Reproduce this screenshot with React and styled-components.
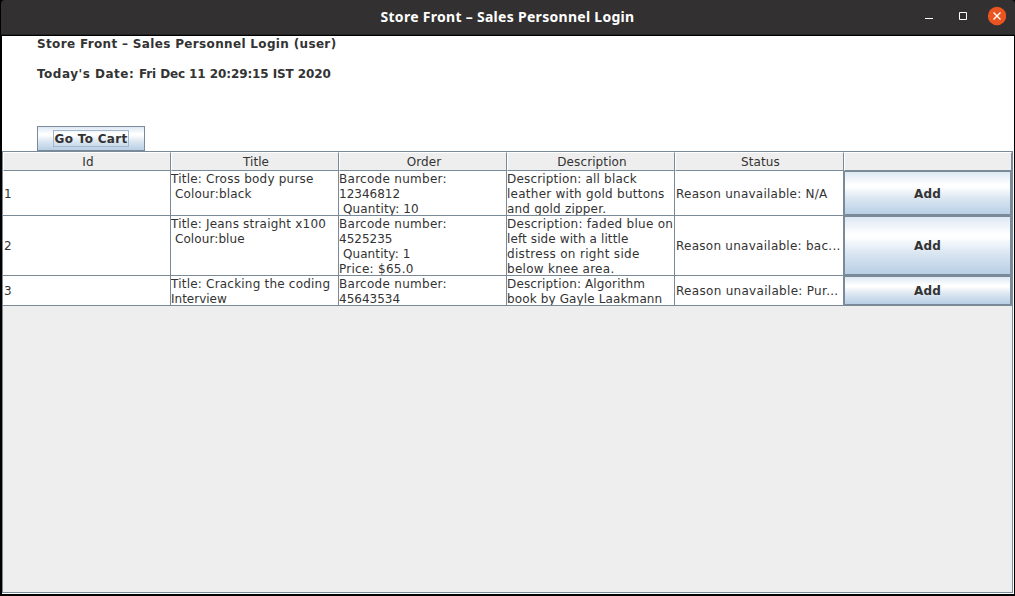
import React from "react";
import styled, { createGlobalStyle } from "styled-components";

const LINE = "#7a8a99";

const GlobalStyle = createGlobalStyle`
  * { box-sizing: border-box; }
  body { margin: 0; background: #000; overflow: hidden; }
`;

const Window = styled.div`
  display: flex;
  flex-direction: column;
  width: 1015px;
  height: 596px;
  background: #000;
  color: #333;
  font: 12px/15px "DejaVu Sans", sans-serif;
`;

const TitleBar = styled.header`
  display: grid;
  grid-template-columns: 1fr auto 1fr;
  align-items: center;
  height: 35px;
  margin-left: 1px;
  padding: 0 9px 2px 8px;
  border-bottom: 1px solid #222;
  border-radius: 4px 4px 0 0;
  background: #323030;
`;

const WindowTitle = styled.h1`
  grid-column: 2;
  margin: 0;
  padding-top: 1px;
  color: #fff;
  font: bold 14px/20px "Noto Sans", sans-serif;
  letter-spacing: 0.29px;
  white-space: nowrap;
`;

const WindowControls = styled.div`
  display: flex;
  justify-content: flex-end;
  align-items: center;
`;

const ControlIcon = styled.svg`
  display: block;
`;

const Content = styled.main`
  display: flex;
  flex-direction: column;
  height: 558px;
  margin: 1px 1px 0 2px;
  padding-bottom: 1px;
  background: #fff;
`;

const Intro = styled.section`
  display: flex;
  flex-direction: column;
  align-items: flex-start;
  height: 115px;
  padding: 1px 0 0 35px;
`;

const Caption = styled.p`
  margin: 0 0 15px;
  font-weight: bold;
  white-space: pre;
`;

const Phrase = styled.span`
  letter-spacing: ${(p) => p.$tracking}px;
`;

const MetalButton = styled.button`
  margin: 0;
  padding: 1px 0 0;
  border: 1px solid ${LINE};
  background: linear-gradient(#dde8f3 0%, #fff 30%, #fff 35%, #dce7f2 62%, #b8cfe5 100%);
  color: #333;
  font: bold 12px/15px "DejaVu Sans", sans-serif;
`;

const CartButton = styled(MetalButton)`
  display: flex;
  justify-content: center;
  align-items: center;
  width: 108px;
  height: 25px;
  margin-top: 29px;
  padding: 0;
`;

const FocusLabel = styled.span`
  display: block;
  width: 76px;
  height: 17px;
  padding-top: 1px;
  border: 1px solid #a3b8cc;
  letter-spacing: 0.3px;
  white-space: nowrap;
`;

const ScrollPane = styled.section`
  flex: 1;
  width: 1011px;
  border: 1px solid ${LINE};
  background: #eee;
`;

const Row = styled.div`
  display: grid;
  grid-template-columns: 168px 168px 168px 168px 169px 168px;
  grid-template-rows: ${(p) => p.$height}px;
`;

const HeaderCell = styled.div`
  padding: 1px 0 0 2px;
  border: 1px solid;
  border-color: #fff ${LINE} ${LINE} #fff;
  background: #eee;
  text-align: center;
  line-height: 16px;
  letter-spacing: 0.1px;
`;

const Cell = styled.div`
  display: flex;
  flex-direction: column;
  justify-content: ${(p) => (p.$middle ? "center" : "flex-start")};
  overflow: hidden;
  padding: ${(p) => (p.$middle ? "2px 0 0 1px" : "1px 0 0")};
  border: solid ${LINE};
  border-width: 0 1px 1px 0;
  background: #fff;
  white-space: pre;
`;

const ActionCell = styled(Cell)`
  padding: 0;
`;

const Line = styled.span`
  flex: none;
  display: block;
  height: 15px;
  letter-spacing: ${(p) => p.$tracking}px;
`;

const AddButton = styled(MetalButton)`
  flex: 1;
  padding: 2px 0 0;
  letter-spacing: 0.2px;
`;

const columns = ["Id", "Title", "Order", "Description", "Status", ""];

// Each line of text is paired with its letter spacing in pixels.
const rows = [
  {
    id: "1",
    height: 45,
    title: [["Title: Cross body purse", 0.22], [" Colour:black", 0.17]],
    order: [["Barcode number:", 0.28], ["12346812", 0], [" Quantity: 10", 0.15]],
    description: [["Description: all black", 0.18], ["leather with gold buttons", 0.25], ["and gold zipper.", 0.2]],
    status: [["Reason unavailable: N/A", 0.24]],
  },
  {
    id: "2",
    height: 60,
    title: [["Title: Jeans straight x100", 0.2], [" Colour:blue", 0.1]],
    order: [["Barcode number:", 0.28], ["4525235", 0], [" Quantity: 1", 0.1], ["Price: $65.0", 0.27]],
    description: [
      ["Description: faded blue on", 0.28],
      ["left side with a little", 0.11],
      ["distress on right side", 0.32],
      ["below knee area.", 0.28],
    ],
    status: [["Reason unavailable: bac...", 0.26]],
  },
  {
    id: "3",
    height: 30,
    title: [["Title: Cracking the coding", 0.21], ["Interview", 0]],
    order: [["Barcode number:", 0.28], ["45643534", 0]],
    description: [["Description: Algorithm", 0.14], ["book by Gayle Laakmann", 0.13]],
    status: [["Reason unavailable: Pur...", 0.3]],
  },
];

function TextCell({ lines, middle }) {
  return (
    <Cell $middle={middle}>
      {lines.map(([text, tracking]) => (
        <Line key={text} $tracking={tracking}>
          {text}
        </Line>
      ))}
    </Cell>
  );
}

export default function App() {
  return (
    <>
      <GlobalStyle />
      <Window>
        <TitleBar>
          <WindowTitle>Store Front – Sales Personnel Login</WindowTitle>
          <WindowControls>
            <ControlIcon width="84" height="20" viewBox="0 0 84 20">
              <path d="M3 12.5h8" stroke="#fff" />
              <path d="M37.5 6.5h7v7h-7z" fill="none" stroke="#fff" />
              <circle cx="75" cy="10" r="9.2" fill="#e95420" />
              <path d="M71.5 6.5l7 7m0-7l-7 7" stroke="#fff" strokeWidth="1.4" />
            </ControlIcon>
          </WindowControls>
        </TitleBar>
        <Content>
          <Intro>
            <Caption>
              <Phrase $tracking={0.34}>Store Front – Sales Personnel Login (user)</Phrase>
            </Caption>
            <Caption>
              <Phrase $tracking={0.5}>Today's Date: </Phrase>
              <Phrase $tracking={-0.1}>Fri Dec 11 20:29:15 IST 2020</Phrase>
            </Caption>
            <CartButton>
              <FocusLabel>Go To Cart</FocusLabel>
            </CartButton>
          </Intro>
          <ScrollPane>
            <Row $height={19}>
              {columns.map((name) => (
                <HeaderCell key={name}>{name}</HeaderCell>
              ))}
            </Row>
            {rows.map((row) => (
              <Row key={row.id} $height={row.height}>
                <TextCell middle lines={[[row.id, 0]]} />
                <TextCell lines={row.title} />
                <TextCell lines={row.order} />
                <TextCell lines={row.description} />
                <TextCell middle lines={row.status} />
                <ActionCell>
                  <AddButton>Add</AddButton>
                </ActionCell>
              </Row>
            ))}
          </ScrollPane>
        </Content>
      </Window>
    </>
  );
}
